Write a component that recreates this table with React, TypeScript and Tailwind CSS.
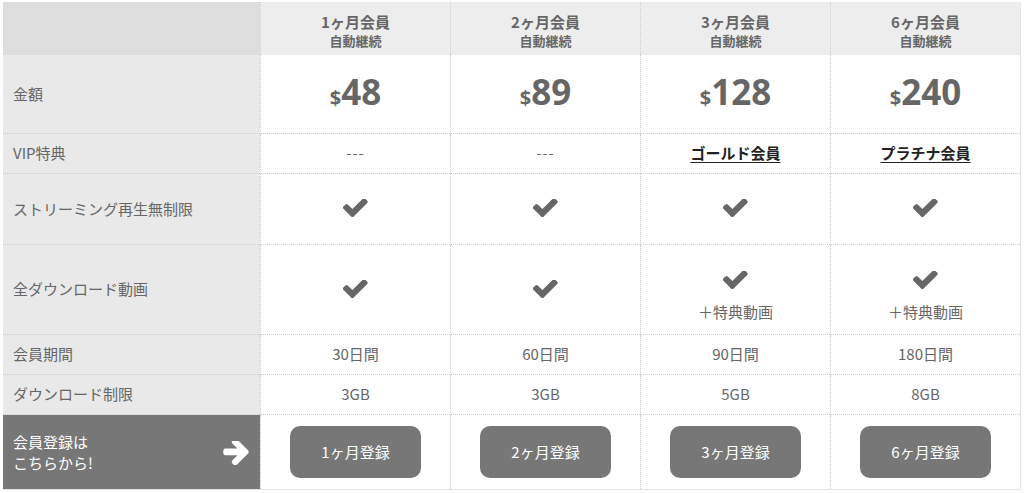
const plans = [
  { name: "1ヶ月会員", price: "48", vip: null, extra: false, days: "30日間", gb: "3GB", btn: "1ヶ月登録" },
  { name: "2ヶ月会員", price: "89", vip: null, extra: false, days: "60日間", gb: "3GB", btn: "2ヶ月登録" },
  { name: "3ヶ月会員", price: "128", vip: "ゴールド会員", extra: true, days: "90日間", gb: "5GB", btn: "3ヶ月登録" },
  { name: "6ヶ月会員", price: "240", vip: "プラチナ会員", extra: true, days: "180日間", gb: "8GB", btn: "6ヶ月登録" },
];

const font = { fontFamily: '"Noto Sans CJK JP", "Noto Sans", sans-serif' };

// font awesome 4 style check
function Check({ className = "" }: { className?: string }) {
  return (
    <svg viewBox="128 400 1560 1100" className={className} fill="currentColor">
      <path d="M1671 566q0 40-28 68l-724 724-136 136q-28 28-68 28t-68-28l-136-136-362-362q-28-28-28-68t28-68l136-136q28-28 68-28t68 28l294 295 656-657q28-28 68-28t68 28l136 136q28 28 28 68z" />
    </svg>
  );
}

function Arrow({ className = "" }: { className?: string }) {
  return (
    <svg viewBox="120 330 1490 1390" className={className} fill="currentColor">
      <path d="M1600 960q0 54-37 91l-651 651q-39 37-91 37-51 0-90-37l-75-75q-38-38-38-91t38-91l293-293h-704q-52 0-84.5-37.5t-32.5-90.5v-128q0-53 32.5-90.5t84.5-37.5h704l-293-294q-38-36-38-90t38-90l75-75q38-38 90-38 53 0 91 38l651 651q37 35 37 90z" />
    </svg>
  );
}

function Label({ children, h }: { children: React.ReactNode; h: string }) {
  return (
    <div className={`${h} flex items-center bg-[#e9e9e9] pl-[10px] text-[15px] text-[#666] border-b border-dotted border-[#ccc]`}>
      {children}
    </div>
  );
}

function Cell({ children, h, col = true }: { children: React.ReactNode; h: string; col?: boolean }) {
  return (
    <div
      className={`${h} flex ${col ? "flex-col" : ""} items-center justify-center bg-white text-[15px] text-[#666] border-b border-l border-dotted border-[#ccc]`}
    >
      {children}
    </div>
  );
}

export default function App() {
  return (
    <div className="min-h-screen bg-white pt-[2px] pl-[3px]" style={font}>
      <div className="grid w-[1018px] grid-cols-[257px_repeat(4,190px)] border-r border-b border-[#e4e4e4]">
        {/* header */}
        <div className="h-[53px] bg-[#dddddd]" />
        {plans.map((p) => (
          <div key={p.name} className="h-[53px] flex flex-col items-center justify-center pt-[2px] bg-[#ededed] text-[#666] border-l border-dotted border-[#ccc]">
            <div className="text-[15px] font-bold leading-[21px]">{p.name}</div>
            <div className="text-[13px] font-bold leading-[17px]">自動継続</div>
          </div>
        ))}

        {/* price */}
        <Label h="h-[79px]">金額</Label>
        {plans.map((p) => (
          <Cell key={p.name} h="h-[79px]" col={false}>
            <span className="font-bold text-[#666] pb-[2px]" style={{ fontFamily: '"Open Sans", sans-serif' }}>
              <span className="text-[20px]">$</span>
              <span className="text-[35px] leading-none">{p.price}</span>
            </span>
          </Cell>
        ))}

        {/* vip */}
        <Label h="h-[40px]">VIP特典</Label>
        {plans.map((p) => (
          <Cell key={p.name} h="h-[40px]">
            {p.vip ? (
              <span className="font-bold text-[#222] underline underline-offset-[3px]">{p.vip}</span>
            ) : (
              <span className="tracking-[1px]">---</span>
            )}
          </Cell>
        ))}

        {/* streaming */}
        <Label h="h-[71px]">ストリーミング再生無制限</Label>
        {plans.map((p) => (
          <Cell key={p.name} h="h-[71px]">
            <Check className="text-[#666] w-[25px] h-[18px] mb-[2px]" />
          </Cell>
        ))}

        {/* download */}
        <Label h="h-[90px]">全ダウンロード動画</Label>
        {plans.map((p) =>
          p.extra ? (
            <div key={p.name} className="h-[90px] flex flex-col items-center pt-[26px] bg-white text-[15px] text-[#666] border-b border-l border-dotted border-[#ccc]">
              <Check className="text-[#666] w-[25px] h-[18px]" />
              <div className="mt-[12px] leading-[21px]">＋特典動画</div>
            </div>
          ) : (
            <Cell key={p.name} h="h-[90px]">
              <Check className="text-[#666] w-[25px] h-[18px] mb-[2px]" />
            </Cell>
          )
        )}

        {/* period */}
        <Label h="h-[40px]">会員期間</Label>
        {plans.map((p) => (
          <Cell key={p.name} h="h-[40px]">
            {p.days}
          </Cell>
        ))}

        {/* limit */}
        <Label h="h-[40px]">ダウンロード制限</Label>
        {plans.map((p) => (
          <Cell key={p.name} h="h-[40px]">
            {p.gb}
          </Cell>
        ))}

        {/* register */}
        <div className="h-[74px] flex items-center justify-between bg-[#777] pl-[10px] pr-[11px]">
          <div className="text-white text-[15px] leading-[21px]">
            会員登録は
            <br />
            こちらから!
          </div>
          <Arrow className="text-white w-[26px] h-[24px] mt-[2px]" />
        </div>
        {plans.map((p) => (
          <div key={p.name} className="h-[74px] flex items-center justify-center bg-white border-l border-dotted border-[#ccc]">
            <button className="w-[131px] h-[52px] rounded-[10px] bg-[#777] text-white text-[15px]">{p.btn}</button>
          </div>
        ))}
      </div>
    </div>
  );
}
